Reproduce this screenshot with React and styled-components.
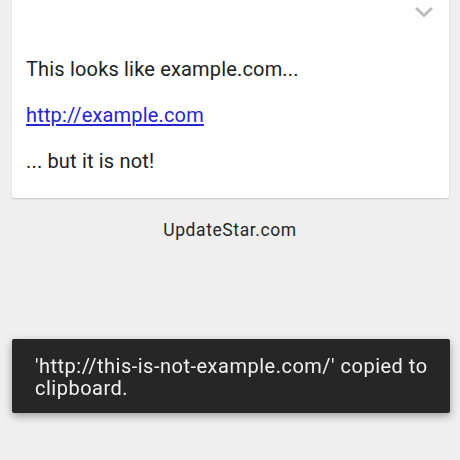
import React from "react"
import styled, { createGlobalStyle } from "styled-components"

const GlobalStyle = createGlobalStyle`
   html,
   body {
      margin: 0;
      padding: 0;
      background-color: #efefef;
      font-family: Roboto, "Noto Sans", "Liberation Sans", sans-serif;
   }
`

const Page = styled.div`
   width: 460px;
   height: 460px;
   overflow: hidden;
   display: flex;
   flex-direction: column;
   align-items: center;
`

const Card = styled.div`
   width: 437px;
   margin: 0 11px 0 12px;
   background-color: #ffffff;
   box-shadow: 0 1px 2px 0 rgb(0 0 0 / 18%);
   border-radius: 0 0 2px 2px;
   padding-bottom: 25px;
`

const CardHeader = styled.div`
   height: 57px;
   display: flex;
   justify-content: flex-end;
   align-items: flex-start;
   padding: 6px 15px 0 0;
   box-sizing: border-box;
`

const CardBody = styled.div`
   display: flex;
   flex-direction: column;
   gap: 22px;
   padding: 0 14px;
`

const Line = styled.p`
   margin: 0;
   font-size: 20px;
   line-height: 24px;
   letter-spacing: 0.17px;
   color: #212121;
`

const Link = styled.a`
   color: #2424d2;
   text-decoration: underline;
   text-underline-offset: 2px;
`

const Footer = styled.div`
   margin-top: 21px;
   font-size: 17.5px;
   line-height: 22px;
   letter-spacing: 0.6px;
   color: #262626;
   text-align: center;
`

const Toast = styled.div`
   position: fixed;
   left: 12px;
   right: 10px;
   bottom: 47px;
   background-color: #262626;
   border-radius: 2px;
   box-shadow: 0 3px 8px 0 rgb(0 0 0 / 35%);
   padding: 16px 20px 14px 23px;
   color: #f0f0f0;
   font-size: 20px;
   line-height: 22px;
   letter-spacing: 0.5px;
`

const Chevron = () => (
   <svg width="20" height="12" viewBox="0 0 20 12">
      <path d="M2 2 L10 9.5 L18 2" fill="none" stroke="#bdbdbd" strokeWidth="3" />
   </svg>
)

const App = () => {
   return (
      <>
         <GlobalStyle />
         <Page>
            <Card>
               <CardHeader>
                  <Chevron />
               </CardHeader>
               <CardBody>
                  <Line>This looks like example.com...</Line>
                  <Line>
                     <Link href="#">http://example.com</Link>
                  </Line>
                  <Line>... but it is not!</Line>
               </CardBody>
            </Card>
            <Footer>UpdateStar.com</Footer>
         </Page>
         <Toast>'http://this-is-not-example.com/' copied to clipboard.</Toast>
      </>
   )
}

export default App
